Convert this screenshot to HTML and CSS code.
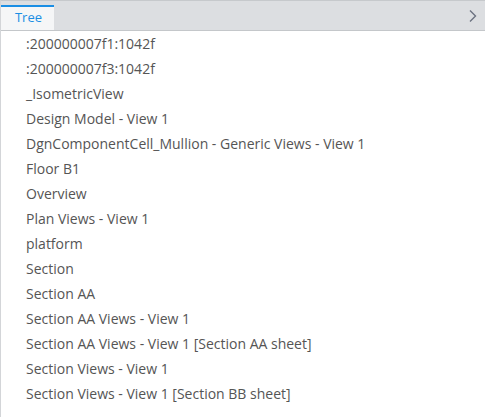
FILE: index.html
```html
<!DOCTYPE html>
<html>
<head>
<meta charset="utf-8">
<link rel="stylesheet" href="styles.css">
</head>
<body>
<div class="panel">
  <div class="tabbar">
    <div class="tab">Tree</div>
    <div class="spacer"></div>
    <svg class="chev" width="10" height="14" viewBox="0 0 10 14"><path d="M2 1.5 L7.5 7 L2 12.5" fill="none" stroke="#6b7280" stroke-width="1.4"/></svg>
  </div>
  <ul class="list">
    <li>:200000007f1:1042f</li>
    <li>:200000007f3:1042f</li>
    <li>_IsometricView</li>
    <li>Design Model - View 1</li>
    <li>DgnComponentCell_Mullion - Generic Views - View 1</li>
    <li>Floor B1</li>
    <li>Overview</li>
    <li>Plan Views - View 1</li>
    <li>platform</li>
    <li>Section</li>
    <li>Section AA</li>
    <li>Section AA Views - View 1</li>
    <li>Section AA Views - View 1 [Section AA sheet]</li>
    <li>Section Views - View 1</li>
    <li>Section Views - View 1 [Section BB sheet]</li>
  </ul>
</div>
</body>
</html>
```
FILE: styles.css
```css
html, body { margin: 0; padding: 0; background: #fff; }
body { font-family: "Open Sans", "Liberation Sans", sans-serif; }
.panel {
  width: 485px; height: 417px; box-sizing: border-box;
  border-left: 1px solid #d3d5d8;
  border-top: 1px solid #c6c9cc;
  overflow: hidden;
}
.tabbar {
  height: 29px; background: #dcdee1;
  border-bottom: 1px solid #c4c7ca;
  display: flex; align-items: stretch;
}
.tab {
  width: 53px; background: #f5f6f7;
  margin-top: 4px;
  border-top: 2px solid #1a8ee4;
  color: #1a8ee4; font-size: 13px;
  text-align: center; line-height: 20px;
  padding-left: 2px;
  box-sizing: border-box;
}
.spacer { flex: 1; }
.chev { align-self: center; margin-right: 7px; }
.list { list-style: none; margin: 0; padding: 0 0 0 25px; }
.list li {
  height: 25px; line-height: 25px;
  font-size: 14px; color: #555; white-space: nowrap;
}
```
